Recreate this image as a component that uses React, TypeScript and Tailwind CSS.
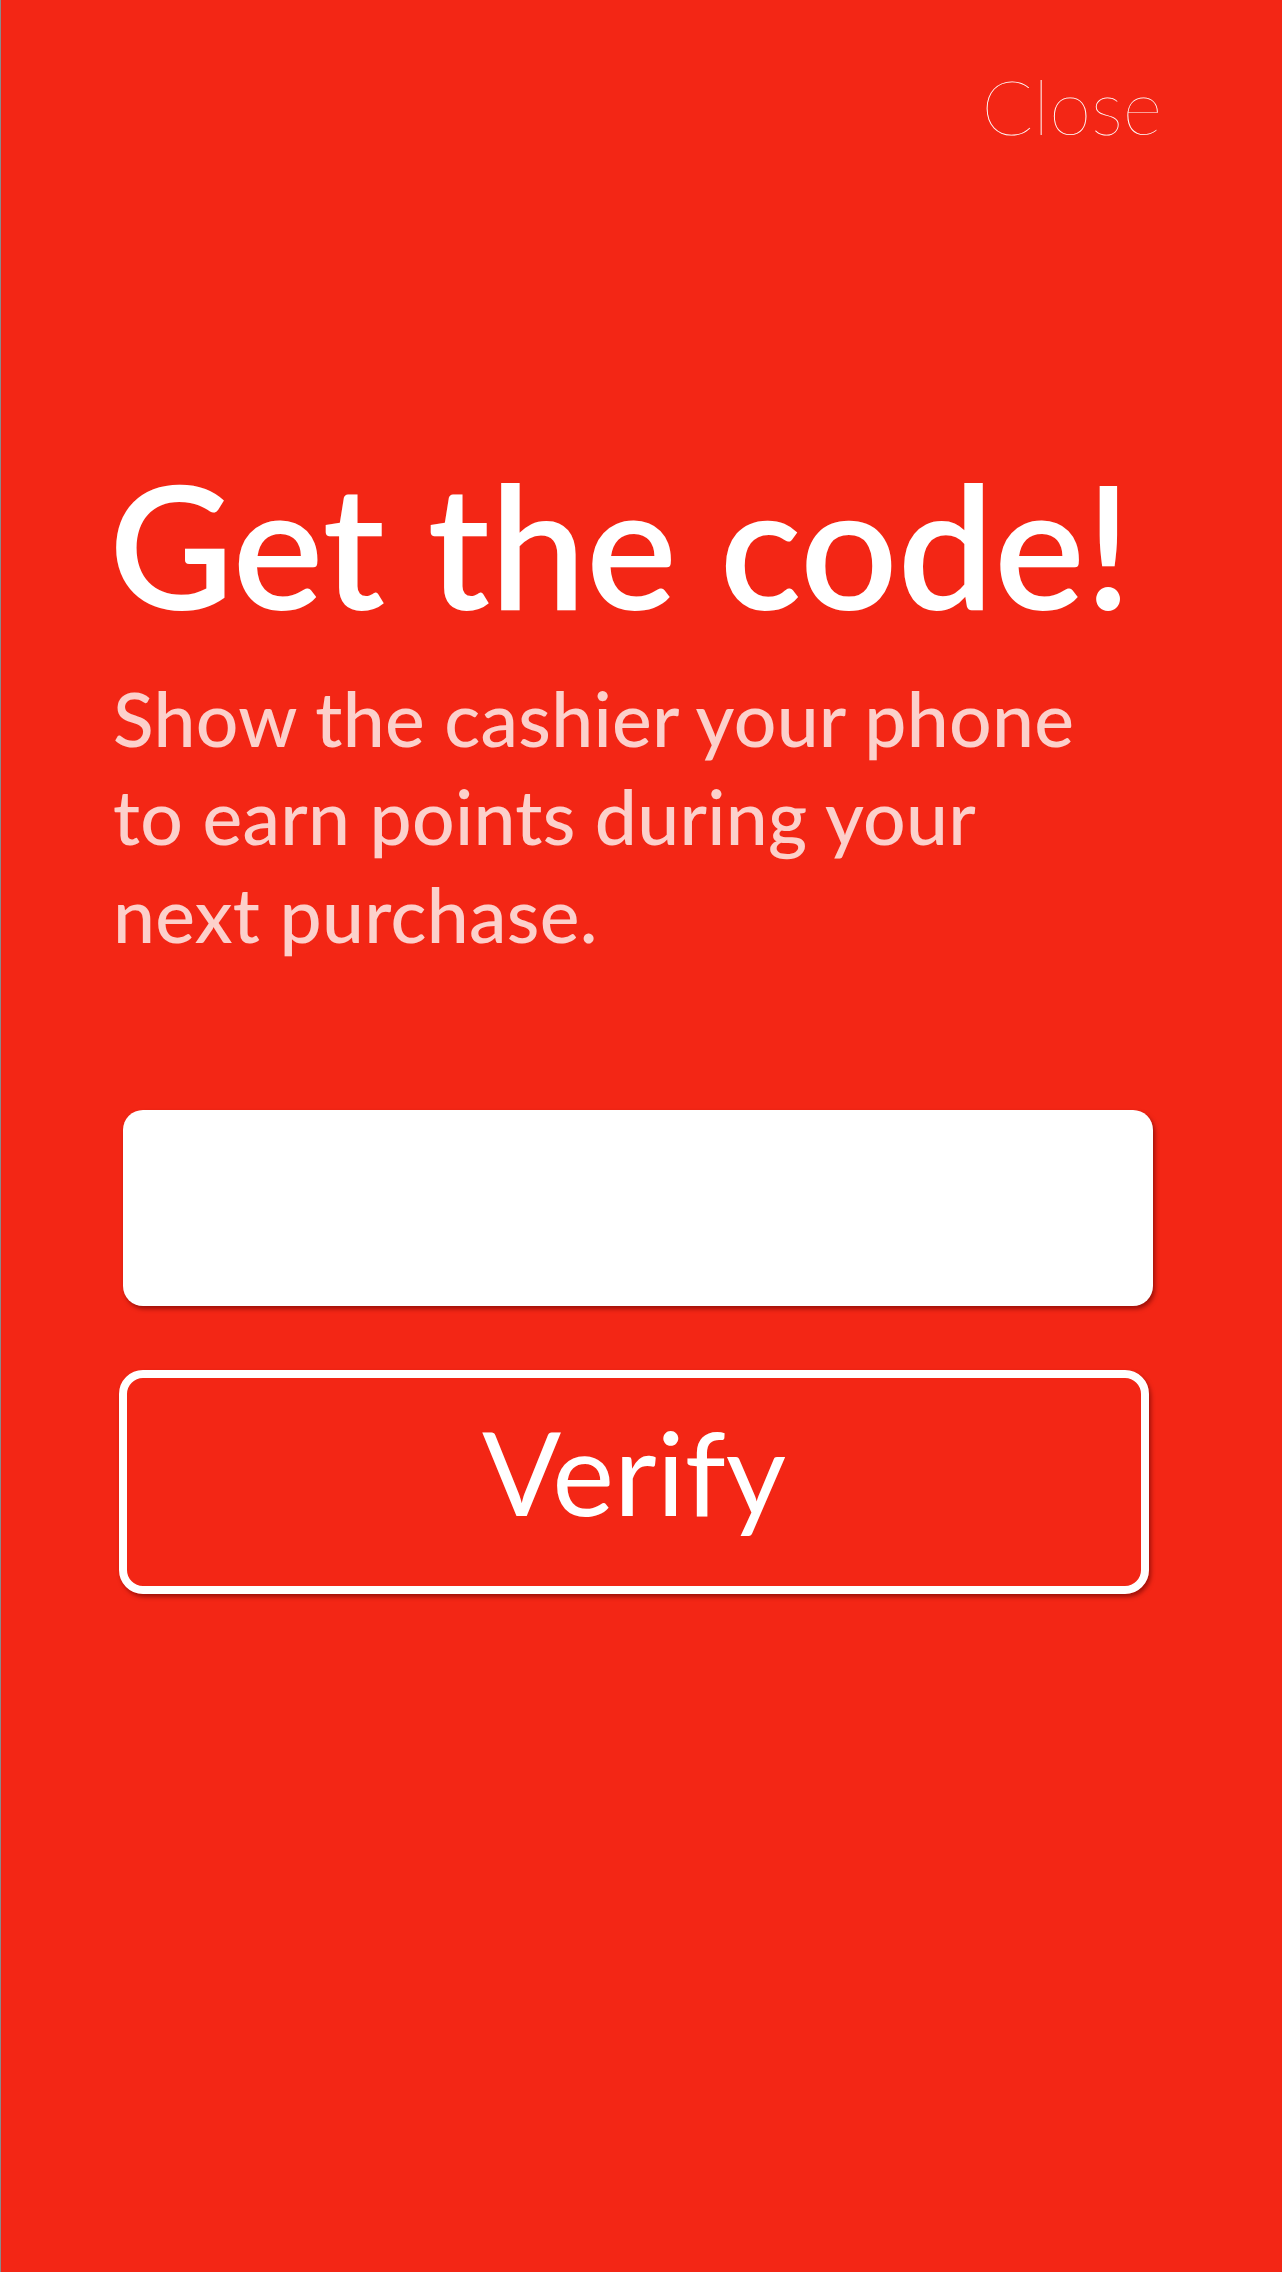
export default function App() {
  return (
    <div className="min-h-screen w-full bg-[#f32615] border-l border-[#8a8a8a] flex flex-col font-['Lato','Liberation_Sans',sans-serif]">
      <div className="flex justify-end pt-[68px] pr-[120px]">
        <button className="text-white text-[76px] font-thin leading-none">Close</button>
      </div>

      <h1 className="mt-[314px] ml-[108px] text-white text-[171px] font-semibold leading-none">
        Get the code!
      </h1>

      <p className="mt-[40px] ml-[112px] text-[#fcd0cb] text-[75px] font-medium leading-[98px] tracking-[0.3px]">
        Show the cashier your phone
        <br />
        to earn points during your
        <br />
        next purchase.
      </p>

      <div className="mt-[147px] ml-[122px] w-[1030px] h-[196px] rounded-[20px] bg-white shadow-[2px_3px_4px_rgba(90,0,0,0.55)]" />

      <button className="mt-[64px] ml-[118px] w-[1030px] h-[224px] pb-[22px] rounded-[24px] border-[8px] border-white text-white text-[117px] font-normal leading-none shadow-[2px_3px_4px_rgba(90,0,0,0.55)]">
        Verify
      </button>
    </div>
  )
}
